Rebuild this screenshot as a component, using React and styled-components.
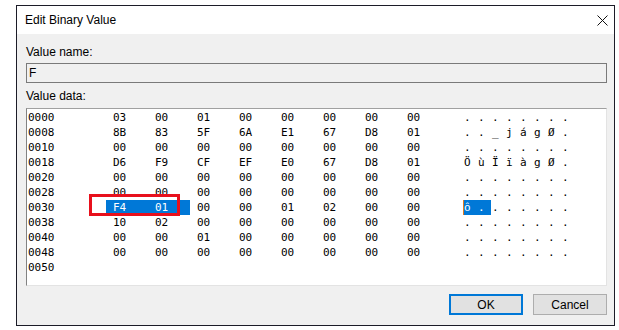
import React from "react";
import styled, { createGlobalStyle } from "styled-components";

const GlobalStyle = createGlobalStyle`
  html, body {
    margin: 0;
    padding: 0;
    background: #ffffff;
  }
  body {
    font-family: "Liberation Sans", Arial, sans-serif;
  }
`;

const rows = [
  ["0000", [0x03, 0x00, 0x01, 0x00, 0x00, 0x00, 0x00, 0x00]],
  ["0008", [0x8b, 0x83, 0x5f, 0x6a, 0xe1, 0x67, 0xd8, 0x01]],
  ["0010", [0x00, 0x00, 0x00, 0x00, 0x00, 0x00, 0x00, 0x00]],
  ["0018", [0xd6, 0xf9, 0xcf, 0xef, 0xe0, 0x67, 0xd8, 0x01]],
  ["0020", [0x00, 0x00, 0x00, 0x00, 0x00, 0x00, 0x00, 0x00]],
  ["0028", [0x00, 0x00, 0x00, 0x00, 0x00, 0x00, 0x00, 0x00]],
  ["0030", [0xf4, 0x01, 0x00, 0x00, 0x01, 0x02, 0x00, 0x00]],
  ["0038", [0x10, 0x02, 0x00, 0x00, 0x00, 0x00, 0x00, 0x00]],
  ["0040", [0x00, 0x00, 0x01, 0x00, 0x00, 0x00, 0x00, 0x00]],
  ["0048", [0x00, 0x00, 0x00, 0x00, 0x00, 0x00, 0x00, 0x00]],
  ["0050", []],
];

// selected bytes: offset 0x30 and 0x31
const isSelected = (addr, i) => addr === "0030" && i < 2;

const toHex = (b) => b.toString(16).toUpperCase().padStart(2, "0");
const toChar = (b) =>
  (b >= 0x20 && b < 0x7f) || b >= 0xa0 ? String.fromCharCode(b) : ".";

const Page = styled.div`
  padding: 5px 0 0 16px;
`;

const Window = styled.div`
  width: 597px;
  border: 1px solid #1c1c28;
  background: #f0f0f0;
  display: flex;
  flex-direction: column;
`;

const TitleBar = styled.div`
  height: 28px;
  background: #ffffff;
  display: flex;
  align-items: center;
  justify-content: space-between;
  padding-left: 8px;
  font-size: 12px;
  color: #000;
`;

const CloseButton = styled.div`
  width: 24px;
  height: 28px;
  display: flex;
  align-items: center;
  justify-content: center;
`;

const Body = styled.div`
  padding: 10px 7px 10px 9px;
  display: flex;
  flex-direction: column;
`;

const Label = styled.div`
  font-size: 12px;
  line-height: 16px;
  height: 16px;
  color: #000;
  margin-top: ${(p) => p.$gap || 0}px;
`;

const NameBox = styled.div`
  margin-top: 3px;
  height: 18px;
  border: 1px solid #7a7a7a;
  background: #f0f0f0;
  font-size: 12px;
  line-height: 18px;
  padding-left: 2px;
`;

const DataBox = styled.div`
  position: relative;
  margin-top: 4px;
  height: 175px;
  background: #ffffff;
  border: 1px solid #e3e3e3;
  border-top-color: #a0a0a0;
  border-left-color: #828282;
  padding-top: 1px;
  box-sizing: content-box;
  font-family: "DejaVu Sans Mono", "Liberation Mono", monospace;
  font-size: 11px;
  color: #000;
`;

const HexRow = styled.div`
  display: grid;
  grid-template-columns: 78px repeat(8, 42px) 21px repeat(8, 14px);
  height: 15px;
  line-height: 15px;
  padding-left: 1px;
`;

const Address = styled.span`
  white-space: pre;
`;

const ByteCell = styled.span`
  padding-left: 7px;
  white-space: pre;
  background: ${(p) => (p.$selected ? "#0078d7" : "transparent")};
  color: ${(p) => (p.$selected ? "#ffffff" : "#000")};
`;

const CharCell = styled.span`
  white-space: pre;
  padding-left: 1px;
  background: ${(p) => (p.$selected ? "#0078d7" : "transparent")};
  color: ${(p) => (p.$selected ? "#ffffff" : "#000")};
  box-shadow: ${(p) => (p.$caret ? "inset 1px 0 0 #e07a20" : "none")};
`;

const Spacer = styled.span``;

const Highlight = styled.div`
  position: absolute;
  left: 62px;
  top: 85px;
  width: 91px;
  height: 22px;
  box-sizing: border-box;
  border: 3px solid #e8101c;
  pointer-events: none;
`;

const ButtonRow = styled.div`
  margin-top: 8px;
  display: flex;
  justify-content: flex-end;
  gap: 10px;
`;

const Button = styled.button`
  width: 74px;
  height: 21px;
  box-sizing: border-box;
  background: #e1e1e1;
  border: ${(p) => (p.$default ? "2px solid #0078d7" : "1px solid #adadad")};
  font-family: "Liberation Sans", Arial, sans-serif;
  font-size: 12px;
  color: #000;
  padding: 0;
  margin: 0;
`;

const CloseIcon = () => (
  <svg width="11" height="11" viewBox="0 0 11 11">
    <path d="M0.5 0.5 L10.5 10.5 M10.5 0.5 L0.5 10.5" stroke="#111" strokeWidth="1" fill="none" />
  </svg>
);

export default function App() {
  return (
    <>
      <GlobalStyle />
      <Page>
        <Window>
          <TitleBar>
            <span>Edit Binary Value</span>
            <CloseButton>
              <CloseIcon />
            </CloseButton>
          </TitleBar>
          <Body>
            <Label>Value name:</Label>
            <NameBox>F</NameBox>
            <Label $gap={5}>Value data:</Label>
            <DataBox>
              {rows.map(([addr, bytes]) => (
                <HexRow key={addr}>
                  <Address>{addr}</Address>
                  {bytes.map((b, i) => (
                    <ByteCell key={i} $selected={isSelected(addr, i)}>
                      {toHex(b)}
                    </ByteCell>
                  ))}
                  {bytes.length > 0 && <Spacer />}
                  {bytes.map((b, i) => (
                    <CharCell
                      key={"c" + i}
                      $selected={isSelected(addr, i)}
                      $caret={isSelected(addr, i) && i === 0}
                    >
                      {toChar(b)}
                    </CharCell>
                  ))}
                </HexRow>
              ))}
              <Highlight />
            </DataBox>
            <ButtonRow>
              <Button $default>OK</Button>
              <Button>Cancel</Button>
            </ButtonRow>
          </Body>
        </Window>
      </Page>
    </>
  );
}
